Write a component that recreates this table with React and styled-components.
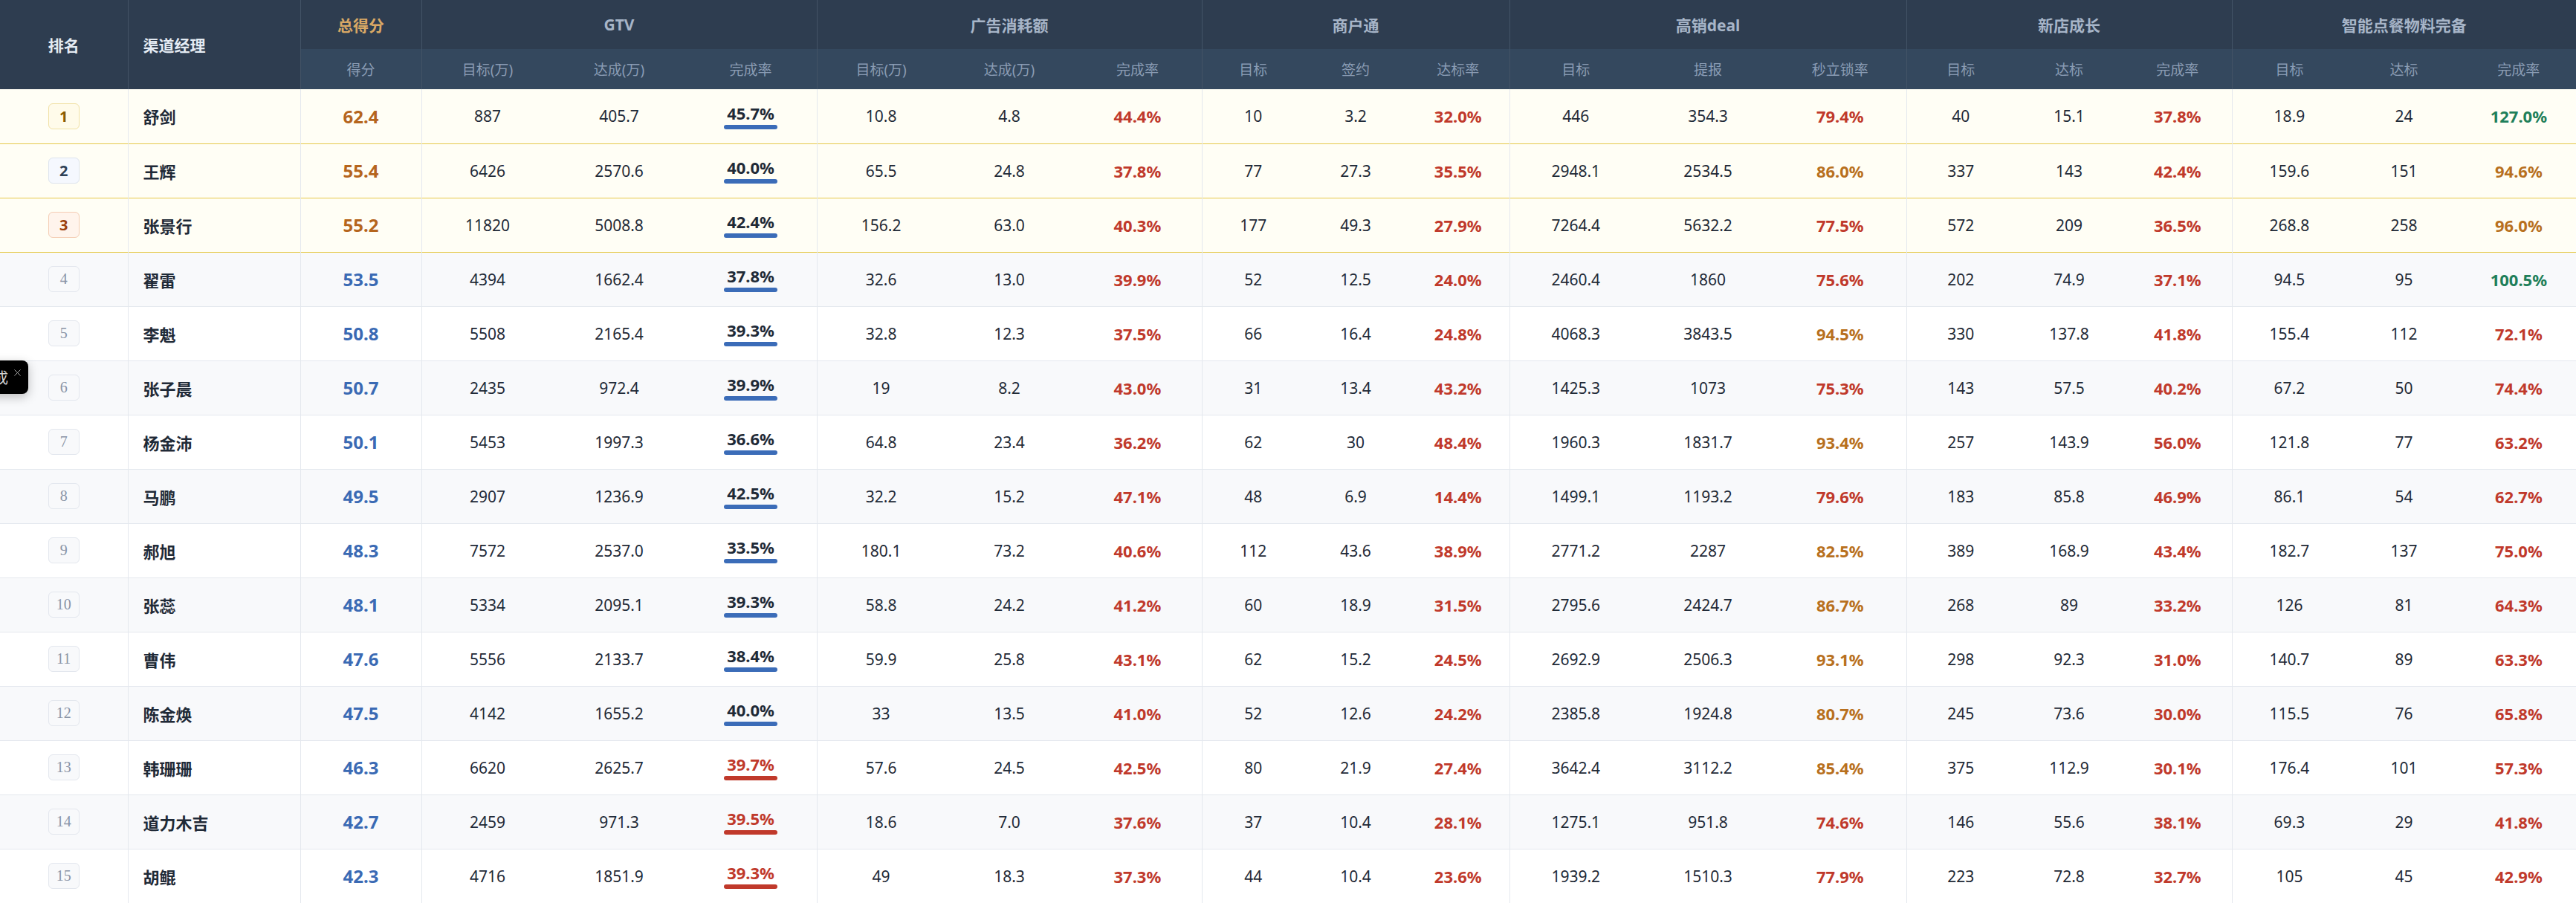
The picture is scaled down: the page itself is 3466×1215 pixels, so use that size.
import React from 'react';
import styled, { createGlobalStyle, css } from 'styled-components';
import { X } from 'lucide-react';

const GlobalStyle = createGlobalStyle`
  html, body {
    margin: 0;
    padding: 0;
    background: #ffffff;
  }
  body {
    font-family: "Noto Sans", "Noto Sans CJK SC", sans-serif;
    color: #1f2a37;
  }
`;

const Page = styled.div`
  position: relative;
  width: 3466px;
  overflow: hidden;
`;

const Table = styled.table`
  width: 3466px;
  table-layout: fixed;
  border-collapse: collapse;
  border-spacing: 0;
`;

const GroupHead = styled.th`
  height: 66px;
  padding: 0;
  background: #2e3d50;
  color: ${(p) => (p.$gold ? '#d9a865' : '#a7b5c8')};
  font-size: 21px;
  font-weight: 700;
  text-align: center;
  border-left: 1px solid #435366;
`;

const FixedHead = styled.th`
  padding: 0 ${(p) => (p.$left ? '20px' : '0')};
  background: #2e3d50;
  color: #e4ebf3;
  font-size: 21px;
  font-weight: 700;
  text-align: ${(p) => (p.$left ? 'left' : 'center')};
  border-left: ${(p) => (p.$first ? 'none' : '1px solid #435366')};
`;

const SubHead = styled.th`
  height: 54px;
  padding: 0;
  background: #34485e;
  color: #8a9cb4;
  font-size: 19px;
  font-weight: 400;
  text-align: center;
  border-left: ${(p) => (p.$edge ? '1px solid #435366' : 'none')};
`;

const Row = styled.tr`
  height: 73px;
  background: ${(p) => (p.$top ? '#fffef5' : p.$alt ? '#f8f9fb' : '#ffffff')};
  border-bottom: 1px solid ${(p) => (p.$top ? '#e6c94a' : '#e4e8ee')};
`;

const Cell = styled.td`
  padding: 0 ${(p) => (p.$left ? '20px' : '0')};
  text-align: ${(p) => (p.$left ? 'left' : 'center')};
  font-size: 21px;
  color: #1f2a37;
  white-space: nowrap;
  border-left: ${(p) => (p.$edge ? '1px solid #e4e8ee' : 'none')};
`;

const Name = styled.span`
  font-size: 22px;
  font-weight: 700;
  color: #1f2a37;
`;

const Score = styled.span`
  font-size: 24px;
  font-weight: 700;
  color: ${(p) => (p.$top ? '#b5651d' : '#3a6ab4')};
`;

const rankTones = {
  1: { bg: '#fffbea', border: '#f1e1a6', color: '#8a5b00' },
  2: { bg: '#f5f8fe', border: '#dde4ee', color: '#2f4257' },
  3: { bg: '#fff4ec', border: '#f4cdb4', color: '#9c3f0c' },
};

const RankBadge = styled.span`
  display: inline-flex;
  align-items: center;
  justify-content: center;
  width: 42px;
  height: 35px;
  box-sizing: border-box;
  border-radius: 6px;
  ${(p) =>
    rankTones[p.$rank]
      ? css`
          background: ${rankTones[p.$rank].bg};
          border: 1px solid ${rankTones[p.$rank].border};
          color: ${rankTones[p.$rank].color};
          font-size: 20px;
          font-weight: 700;
        `
      : css`
          background: #f8f9fb;
          border: 1px solid #e3e7ee;
          color: #8a94a6;
          font-family: "Liberation Serif", serif;
          font-size: 20px;
          font-weight: 400;
        `}
`;

const Rate = styled.span`
  font-size: 22px;
  font-weight: 700;
  color: ${(p) => (p.$tone === 'green' ? '#1f7f5a' : p.$tone === 'orange' ? '#b8701e' : '#c0392b')};
`;

const BarRate = styled.span`
  position: relative;
  display: inline-block;
  padding: 0 4px 9px;
  font-size: 22px;
  font-weight: 700;
  line-height: 26px;
  vertical-align: middle;
  color: ${(p) => (p.$low ? '#c0392b' : '#1f2a37')};

  &::after {
    content: '';
    position: absolute;
    left: 0;
    right: 0;
    bottom: 0;
    height: 6px;
    border-radius: 3px;
    background: ${(p) => (p.$low ? '#c0392b' : '#3b6cb8')};
  }
`;

const Toast = styled.div`
  position: absolute;
  left: -92px;
  top: 485px;
  width: 130px;
  height: 45px;
  box-sizing: border-box;
  padding-right: 27px;
  background: #000;
  border-radius: 8px;
  box-shadow: 0 4px 14px rgba(0, 0, 0, 0.25);
  display: flex;
  align-items: center;
  justify-content: flex-end;
  color: #d5d5d5;
  font-size: 20px;
`;

const Close = styled.span`
  position: absolute;
  top: 9px;
  right: 7px;
  display: flex;
  color: #b8b8b8;
`;

const groups = [
  { title: 'GTV', subs: ['目标(万)', '达成(万)', '完成率'], w: 532 },
  { title: '广告消耗额', subs: ['目标(万)', '达成(万)', '完成率'], w: 518 },
  { title: '商户通', subs: ['目标', '签约', '达标率'], w: 414 },
  { title: '高销deal', subs: ['目标', '提报', '秒立锁率'], w: 534 },
  { title: '新店成长', subs: ['目标', '达标', '完成率'], w: 438 },
  { title: '智能点餐物料完备', subs: ['目标', '达标', '完成率'], w: 463 },
];

const rows = [
  ['舒剑', '62.4', '887', '405.7', '45.7%', '10.8', '4.8', '44.4%', '10', '3.2', '32.0%', '446', '354.3', '79.4%', '40', '15.1', '37.8%', '18.9', '24', '127.0%'],
  ['王辉', '55.4', '6426', '2570.6', '40.0%', '65.5', '24.8', '37.8%', '77', '27.3', '35.5%', '2948.1', '2534.5', '86.0%', '337', '143', '42.4%', '159.6', '151', '94.6%'],
  ['张景行', '55.2', '11820', '5008.8', '42.4%', '156.2', '63.0', '40.3%', '177', '49.3', '27.9%', '7264.4', '5632.2', '77.5%', '572', '209', '36.5%', '268.8', '258', '96.0%'],
  ['翟雷', '53.5', '4394', '1662.4', '37.8%', '32.6', '13.0', '39.9%', '52', '12.5', '24.0%', '2460.4', '1860', '75.6%', '202', '74.9', '37.1%', '94.5', '95', '100.5%'],
  ['李魁', '50.8', '5508', '2165.4', '39.3%', '32.8', '12.3', '37.5%', '66', '16.4', '24.8%', '4068.3', '3843.5', '94.5%', '330', '137.8', '41.8%', '155.4', '112', '72.1%'],
  ['张子晨', '50.7', '2435', '972.4', '39.9%', '19', '8.2', '43.0%', '31', '13.4', '43.2%', '1425.3', '1073', '75.3%', '143', '57.5', '40.2%', '67.2', '50', '74.4%'],
  ['杨金沛', '50.1', '5453', '1997.3', '36.6%', '64.8', '23.4', '36.2%', '62', '30', '48.4%', '1960.3', '1831.7', '93.4%', '257', '143.9', '56.0%', '121.8', '77', '63.2%'],
  ['马鹏', '49.5', '2907', '1236.9', '42.5%', '32.2', '15.2', '47.1%', '48', '6.9', '14.4%', '1499.1', '1193.2', '79.6%', '183', '85.8', '46.9%', '86.1', '54', '62.7%'],
  ['郝旭', '48.3', '7572', '2537.0', '33.5%', '180.1', '73.2', '40.6%', '112', '43.6', '38.9%', '2771.2', '2287', '82.5%', '389', '168.9', '43.4%', '182.7', '137', '75.0%'],
  ['张蕊', '48.1', '5334', '2095.1', '39.3%', '58.8', '24.2', '41.2%', '60', '18.9', '31.5%', '2795.6', '2424.7', '86.7%', '268', '89', '33.2%', '126', '81', '64.3%'],
  ['曹伟', '47.6', '5556', '2133.7', '38.4%', '59.9', '25.8', '43.1%', '62', '15.2', '24.5%', '2692.9', '2506.3', '93.1%', '298', '92.3', '31.0%', '140.7', '89', '63.3%'],
  ['陈金焕', '47.5', '4142', '1655.2', '40.0%', '33', '13.5', '41.0%', '52', '12.6', '24.2%', '2385.8', '1924.8', '80.7%', '245', '73.6', '30.0%', '115.5', '76', '65.8%'],
  ['韩珊珊', '46.3', '6620', '2625.7', '39.7%', '57.6', '24.5', '42.5%', '80', '21.9', '27.4%', '3642.4', '3112.2', '85.4%', '375', '112.9', '30.1%', '176.4', '101', '57.3%'],
  ['道力木吉', '42.7', '2459', '971.3', '39.5%', '18.6', '7.0', '37.6%', '37', '10.4', '28.1%', '1275.1', '951.8', '74.6%', '146', '55.6', '38.1%', '69.3', '29', '41.8%'],
  ['胡鲲', '42.3', '4716', '1851.9', '39.3%', '49', '18.3', '37.3%', '44', '10.4', '23.6%', '1939.2', '1510.3', '77.9%', '223', '72.8', '32.7%', '105', '45', '42.9%'],
];

const toneOf = (v) => {
  const n = parseFloat(v);
  if (n >= 100) return 'green';
  if (n >= 80) return 'orange';
  return 'red';
};

const App = () => {
  return (
    <Page>
      <GlobalStyle />
      <Table>
        <colgroup>
          <col style={{ width: 172 }} />
          <col style={{ width: 232 }} />
          <col style={{ width: 163 }} />
          {groups.map((g) =>
            g.subs.map((s, i) => <col key={g.title + i} style={{ width: g.w / 3 }} />)
          )}
        </colgroup>
        <thead>
          <tr>
            <FixedHead rowSpan={2} $first>排名</FixedHead>
            <FixedHead rowSpan={2} $left>渠道经理</FixedHead>
            <GroupHead $gold>总得分</GroupHead>
            {groups.map((g) => (
              <GroupHead key={g.title} colSpan={3}>
                {g.title}
              </GroupHead>
            ))}
          </tr>
          <tr>
            <SubHead $edge>得分</SubHead>
            {groups.map((g) =>
              g.subs.map((s, i) => (
                <SubHead key={g.title + s + i} $edge={i === 0}>
                  {s}
                </SubHead>
              ))
            )}
          </tr>
        </thead>
        <tbody>
          {rows.map((r, idx) => {
            const rank = idx + 1;
            const top = rank <= 3;
            const [name, score, ...vals] = r;
            return (
              <Row key={name} $top={top} $alt={!top && rank % 2 === 0}>
                <Cell>
                  <RankBadge $rank={rank}>{rank}</RankBadge>
                </Cell>
                <Cell $left $edge>
                  <Name>{name}</Name>
                </Cell>
                <Cell $edge>
                  <Score $top={top}>{score}</Score>
                </Cell>
                {vals.map((v, i) => {
                  const edge = i % 3 === 0;
                  if (i === 2) {
                    return (
                      <Cell key={i}>
                        <BarRate $low={rank >= 13}>{v}</BarRate>
                      </Cell>
                    );
                  }
                  if (i % 3 === 2) {
                    return (
                      <Cell key={i}>
                        <Rate $tone={toneOf(v)}>{v}</Rate>
                      </Cell>
                    );
                  }
                  return (
                    <Cell key={i} $edge={edge}>
                      {v}
                    </Cell>
                  );
                })}
              </Row>
            );
          })}
        </tbody>
      </Table>
      <Toast>
        加载完成
        <Close>
          <X size={15} strokeWidth={1.5} />
        </Close>
      </Toast>
    </Page>
  );
};

export default App;
